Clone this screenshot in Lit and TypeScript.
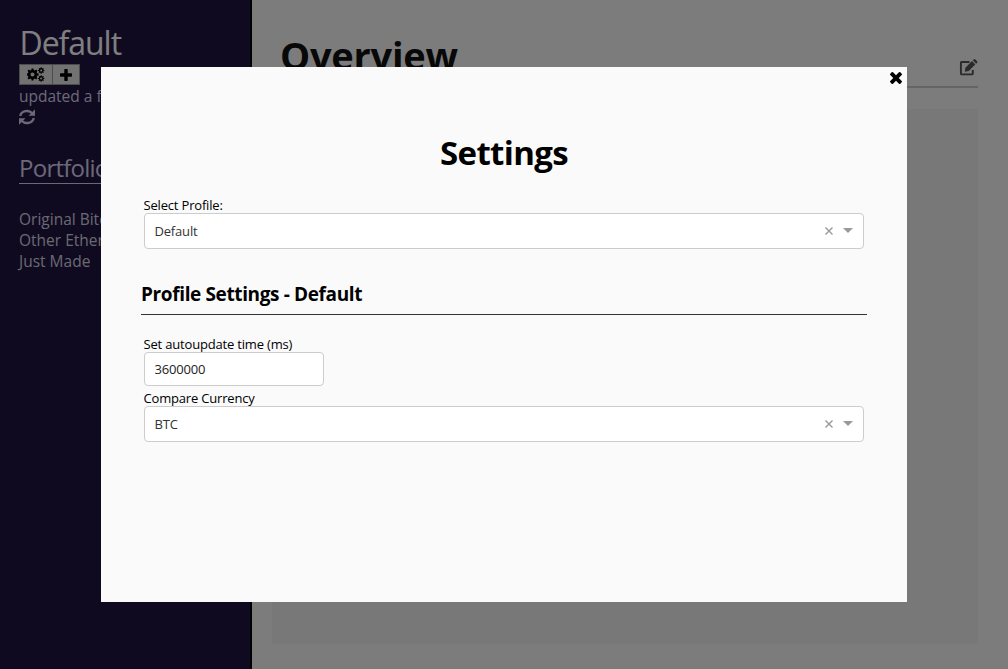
import { LitElement, html, css, svg } from "lit";
import { customElement } from "lit/decorators.js";

const gearPath = (cx: number, cy: number, r: number, inner: number, teeth: number) => {
  const parts: string[] = [];
  const point = (angle: number, radius: number) =>
    `${(cx + Math.cos(angle) * radius).toFixed(2)} ${(cy + Math.sin(angle) * radius).toFixed(2)}`;
  const step = (Math.PI * 2) / teeth;
  for (let i = 0; i < teeth; i++) {
    const a = i * step;
    parts.push(point(a - step * 0.32, r * 0.77), point(a - step * 0.2, r), point(a + step * 0.2, r), point(a + step * 0.32, r * 0.77));
  }
  return `M${parts.join("L")}ZM${cx - inner} ${cy}a${inner} ${inner} 0 1 0 ${inner * 2} 0a${inner} ${inner} 0 1 0 ${-inner * 2} 0Z`;
};

const cogs = svg`<svg width="18" height="16" viewBox="0 0 18 16" fill="currentColor" fill-rule="evenodd">
  <path d=${gearPath(5.5, 7.5, 6.2, 2, 8)}></path>
  <path d=${gearPath(14.2, 3.5, 3.2, 1.1, 8)}></path>
  <path d=${gearPath(14.2, 11.5, 3.2, 1.1, 8)}></path>
</svg>`;
const plus = svg`<svg width="12" height="12" viewBox="0 0 12 12" fill="currentColor"><path d="M5 0h2q.7 0 .7.7v3.6h3.6q.7 0 .7.7v2q0 .7-.7.7H7.7v3.6q0 .7-.7.7H5q-.7 0-.7-.7V7.700H.7Q0 7.700 0 7V5q0-.7.7-.7h3.600V.7Q4.300 0 5 0z"></path></svg>`;
const refresh = svg`<svg width="16" height="16" viewBox="0 0 16 16"><g fill="none" stroke="currentColor" stroke-width="2.300"><path d="M1.200 7A6.900 6.200 0 0 1 13.300 4.300"></path><path d="M14.800 9A6.900 6.200 0 0 1 2.700 11.700"></path></g><path fill="currentColor" d="M16 .3V6.800H9.500zM0 15.700V9.200h6.500z"></path></svg>`;
const edit = svg`<svg width="19" height="17" viewBox="0 0 19 17"><path fill="none" stroke="currentColor" stroke-width="1.900" d="M10.500 3H2.900Q1.900 3 1.900 4V14.400Q1.900 15.400 2.900 15.400H12.800Q13.800 15.400 13.800 14.400V11"></path><path fill="currentColor" d="M5.800 12.700l.6-4L13 2.100l3.300 3.300L9.700 12.100zM13.800 1.300L14.700.5q.8-.8 1.700 0l1.700 1.700q.7.800 0 1.600l-.9.900z"></path></svg>`;
const close = svg`<svg width="12" height="12" viewBox="302 302 1188 1188" fill="currentColor"><path d="M1490 1322q0 40-28 68l-136 136q-28 28-68 28t-68-28l-294-294-294 294q-28 28-68 28t-68-28l-136-136q-28-28-28-68t28-68l294-294-294-294q-28-28-28-68t28-68l136-136q28-28 68-28t68 28l294 294 294-294q28-28 68-28t68 28l136 136q28 28 28 68t-28 68l-294 294 294 294q28 28 28 68z" transform="translate(0 -64)"></path></svg>`;

@customElement("select-box")
class SelectBox extends LitElement {
  static properties = { value: {} };
  declare value: string;
  static styles = css`
    :host { display: block; }
    .box { box-sizing: border-box; height: 36px; display: flex; align-items: center; border: 1px solid #ccc; border-radius: 4px; background: #fff; padding: 0 10px 0 9.5px; color: #333; }
    .value { flex: 1; }
    .clear { width: 8px; height: 8px; margin-right: 10px; stroke: #999; stroke-width: 1.4; }
    .arrow { border: 5px solid transparent; border-top-color: #999; border-bottom: 0; margin-top: -2px; }
  `;
  render() {
    return html`<div class="box"><span class="value">${this.value}</span>
      <svg class="clear" viewBox="0 0 8 8"><path d="M.5 .5L7.500 7.500M7.500 .5L.5 7.500"></path></svg>
      <span class="arrow"></span></div>`;
  }
}

@customElement("app-root")
class AppRoot extends LitElement {
  static styles = css`
    :host { display: block; position: relative; width: 1008px; height: 669px; overflow: hidden; font-family: "Open Sans", "Noto Sans", sans-serif; }
    h1, h2, h3 { margin: 0; }
    svg { display: block; }
    .page { display: grid; grid-template-columns: 252px 1fr; height: 669px; background: #f8f8f8; }
    .side { box-sizing: border-box; padding: 22px 20px 0 19px; background: #1e1440; border-right: 2px solid #000; color: #d8d2ec; white-space: nowrap; overflow: hidden; }
    .profile { font-size: 32px; line-height: 42px; font-weight: 400; color: #fff; letter-spacing: -1.05px; padding-left: 0.5px; }
    .tools { display: flex; }
    .tool { box-sizing: border-box; height: 21px; border: 1px solid #999; background: #e4e4e4; color: #000; display: grid; place-items: center; }
    .wide { width: 34px; }
    .small { width: 28px; margin-left: -1px; }
    .updated { font-size: 15.5px; line-height: 22px; height: 24px; letter-spacing: 0; }
    .refresh { height: 16px; }
    .heading { font-size: 24px; font-weight: 400; line-height: 32px; margin-top: 27px; padding-bottom: 3px; height: 28px; border-bottom: 1px solid #d8d2ec; letter-spacing: -0.75px; }
    .list { margin-top: 25px; font-size: 15.5px; line-height: 21px; color: #d6d3e0; letter-spacing: 0; }
    .main { padding: 30px 30px 0 20px; }
    .top { display: flex; justify-content: space-between; align-items: flex-start; height: 56px; border-bottom: 2px solid #cacaca; padding-left: 8px; }
    .overview { font-size: 38px; line-height: 50px; color: #111; letter-spacing: -0.25px; }
    .edit { margin-top: 29px; color: #555; }
    .panel { height: 535px; margin-top: 21px; background: #f0f0f0; }
    .overlay { position: absolute; inset: 0; display: grid; place-items: center; background: rgba(0, 0, 0, .5); }
    .modal { box-sizing: border-box; position: relative; width: 806px; height: 535px; background: #fafafa; padding: 62px 40px 0; font-size: 13px; line-height: 18px; letter-spacing: -0.18px; color: #000; }
    .close { position: absolute; right: 5px; top: 5px; }
    .title { font-size: 33px; line-height: 48px; text-align: center; letter-spacing: -0.65px; }
    .field { margin: 0 3px 0 3px; }
    .first { margin-top: 18px; }
    .section { font-size: 19px; line-height: 30px; height: 35px; margin-top: 30px; margin-bottom: 19px; border-bottom: 1px solid #333; letter-spacing: -0.37px; }
    .input { box-sizing: border-box; width: 180px; height: 34px; border: 1px solid #ccc; border-radius: 4px; background: #fff; padding: 0 9.5px; font: inherit; letter-spacing: inherit; color: #222; display: block; margin-bottom: 2px; }
    .label { display: block; height: 18px; line-height: 20px; margin-left: -0.5px; }
  `;
  render() {
    return html`
      <div class="page">
        <aside class="side">
          <h1 class="profile"><span>Default</span></h1>
          <div class="tools"><span class="tool wide">${cogs}</span><span class="tool small">${plus}</span></div>
          <div class="updated">updated a few seconds ago</div>
          <div class="refresh">${refresh}</div>
          <h2 class="heading">Portfolios</h2>
          <div class="list"><div>Original Bitcoin</div><div>Other Ethereum</div><div>Just Made</div></div>
        </aside>
        <main class="main">
          <div class="top"><h1 class="overview">Overview</h1><span class="edit">${edit}</span></div>
          <div class="panel"></div>
        </main>
      </div>
      <div class="overlay">
        <section class="modal">
          <span class="close">${close}</span>
          <h1 class="title">Settings</h1>
          <div class="field first"><span class="label">Select Profile:</span><select-box value="Default"></select-box></div>
          <h3 class="section">Profile Settings - Default</h3>
          <div class="field"><span class="label">Set autoupdate time (ms)</span><input class="input" value="3600000">
          <span class="label">Compare Currency</span><select-box value="BTC"></select-box></div>
        </section>
      </div>`;
  }
}
